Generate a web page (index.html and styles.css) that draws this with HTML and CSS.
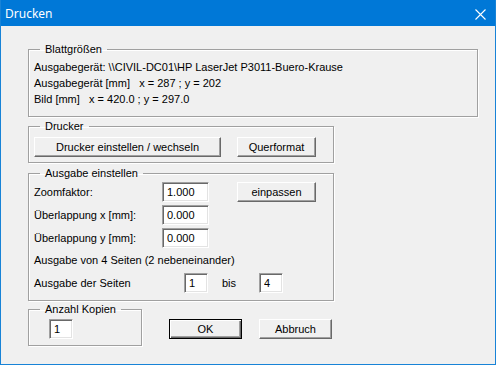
FILE: index.html
```html
<!DOCTYPE html>
<html lang="de">
<head>
    <meta charset="UTF-8">
    <title>Drucken</title>
    <link rel="stylesheet" href="styles.css">
</head>
<body>
    <div class="window">
        <div class="titlebar">
            <span class="title">Drucken</span>
            <svg class="close" width="11" height="11" viewBox="0 0 11 11">
                <path d="M0.5 0.5 L10.5 10.5 M10.5 0.5 L0.5 10.5" stroke="#fff" stroke-width="1.1" fill="none"/>
            </svg>
        </div>

        <div class="content">
            <fieldset class="group group-sheet">
                <legend>Blattgrößen</legend>
                <div class="line">Ausgabegerät: \\CIVIL-DC01\HP LaserJet P3011-Buero-Krause</div>
                <div class="line">Ausgabegerät [mm]&nbsp;&nbsp; x = 287 ; y = 202</div>
                <div class="line">Bild [mm]&nbsp;&nbsp; x = 420.0 ; y = 297.0</div>
            </fieldset>

            <fieldset class="group group-printer">
                <legend>Drucker</legend>
                <div class="row">
                    <button class="button btn-setup">Drucker einstellen / wechseln</button>
                    <button class="button btn-side">Querformat</button>
                </div>
            </fieldset>

            <fieldset class="group group-output">
                <legend>Ausgabe einstellen</legend>
                <div class="row field-row">
                    <span class="field-label">Zoomfaktor:</span>
                    <input class="edit edit-wide" value="1.000">
                    <button class="button btn-side">einpassen</button>
                </div>
                <div class="row field-row">
                    <span class="field-label">Überlappung x [mm]:</span>
                    <input class="edit edit-wide" value="0.000">
                </div>
                <div class="row field-row">
                    <span class="field-label">Überlappung y [mm]:</span>
                    <input class="edit edit-wide" value="0.000">
                </div>
                <div class="note">Ausgabe von 4 Seiten (2 nebeneinander)</div>
                <div class="row">
                    <span class="pages-label">Ausgabe der Seiten</span>
                    <input class="edit edit-small" value="1">
                    <span class="bis">bis</span>
                    <input class="edit edit-small" value="4">
                </div>
            </fieldset>

            <div class="bottom">
                <fieldset class="group group-copies">
                    <legend>Anzahl Kopien</legend>
                    <input class="edit edit-small copies" value="1">
                </fieldset>
                <button class="button btn-dialog btn-default">OK</button>
                <button class="button btn-dialog">Abbruch</button>
            </div>
        </div>
    </div>
</body>
</html>
```

FILE: styles.css
```css
body {
    margin: 0;
    padding: 0;
    background-color: #f0f0f0;
    font-family: "Liberation Sans", Arial, sans-serif;
    font-size: 11px;
    color: #000;
}

.window {
    width: 496px;
    height: 365px;
    box-sizing: border-box;
    border: 1px solid #1883d7;
    border-top: none;
    background-color: #f0f0f0;
    overflow: hidden;
}

.titlebar {
    height: 26px;
    margin: 0 -1px;
    background-color: #0078d7;
    display: flex;
    align-items: center;
    justify-content: space-between;
    padding: 0 10px 0 5px;
}

.title {
    font-family: "Noto Sans", sans-serif;
    font-size: 12px;
    color: #fff;
}

.close {
    margin-top: 2px;
}

.content {
    padding: 17px 0 0 27px;
}

/* group boxes */
.group {
    margin: 0;
    padding: 0;
    border: 1px solid #a0a0a0;
    box-shadow: inset 1px 1px 0 #fff, 1px 1px 0 #fff;
    box-sizing: border-box;
    min-width: 0;
}

.group legend {
    padding: 0 5px 0 5px;
    margin-left: 6px;
    line-height: 13px;
    height: 13px;
}

.group-sheet {
    width: 450px;
    padding: 3px 5px 9px 5px;
}

.line {
    height: 16px;
    line-height: 16px;
    white-space: nowrap;
}

.group-printer {
    width: 306px;
    margin-top: 3px;
    padding: 4px 5px 5px 5px;
}

.group-output {
    width: 306px;
    margin-top: 4px;
    padding: 2px 5px 7px 5px;
}

.row {
    display: flex;
    align-items: center;
}

.field-row {
    margin-bottom: 3px;
}

.field-label {
    width: 128px;
}

.note {
    height: 18px;
    line-height: 18px;
    margin-bottom: 4px;
}

.pages-label {
    width: 150px;
}

.bis {
    width: 51px;
    padding-left: 14px;
    box-sizing: border-box;
}

/* buttons */
.button {
    font-family: inherit;
    font-size: 11px;
    color: #000;
    height: 20px;
    padding: 0;
    background-color: #f0f0f0;
    border: 1px solid;
    border-color: #fff #696969 #696969 #fff;
    box-shadow: inset -1px -1px 0 #a0a0a0;
    box-sizing: border-box;
}

.btn-setup {
    width: 187px;
}

.btn-side {
    width: 79px;
    margin-left: 16px;
}

.field-row .btn-side {
    margin-left: 28px;
}

.btn-dialog {
    width: 73px;
    margin-top: 16px;
}

.btn-default {
    border-color: #000;
    box-shadow: inset 1px 1px 0 #fff, inset -1px -1px 0 #696969, inset -2px -2px 0 #a0a0a0;
    margin-left: 27px;
}

.btn-default + .btn-dialog {
    margin-left: 17px;
}

/* edit fields */
.edit {
    font-family: inherit;
    font-size: 11px;
    height: 20px;
    padding: 0 0 0 4px;
    margin: 0;
    background-color: #fff;
    border: 1px solid;
    border-color: #a0a0a0 #fff #fff #a0a0a0;
    box-shadow: inset 1px 1px 0 #696969, inset -1px -1px 0 #e3e3e3;
    box-sizing: border-box;
    outline: none;
}

.edit-wide {
    width: 47px;
}

.edit-small {
    width: 24px;
}

.bottom {
    display: flex;
    align-items: flex-start;
    margin-top: 2px;
}

.group-copies {
    width: 114px;
    padding: 3px 5px 6px 5px;
}

.copies {
    margin-left: 15px;
}
```
